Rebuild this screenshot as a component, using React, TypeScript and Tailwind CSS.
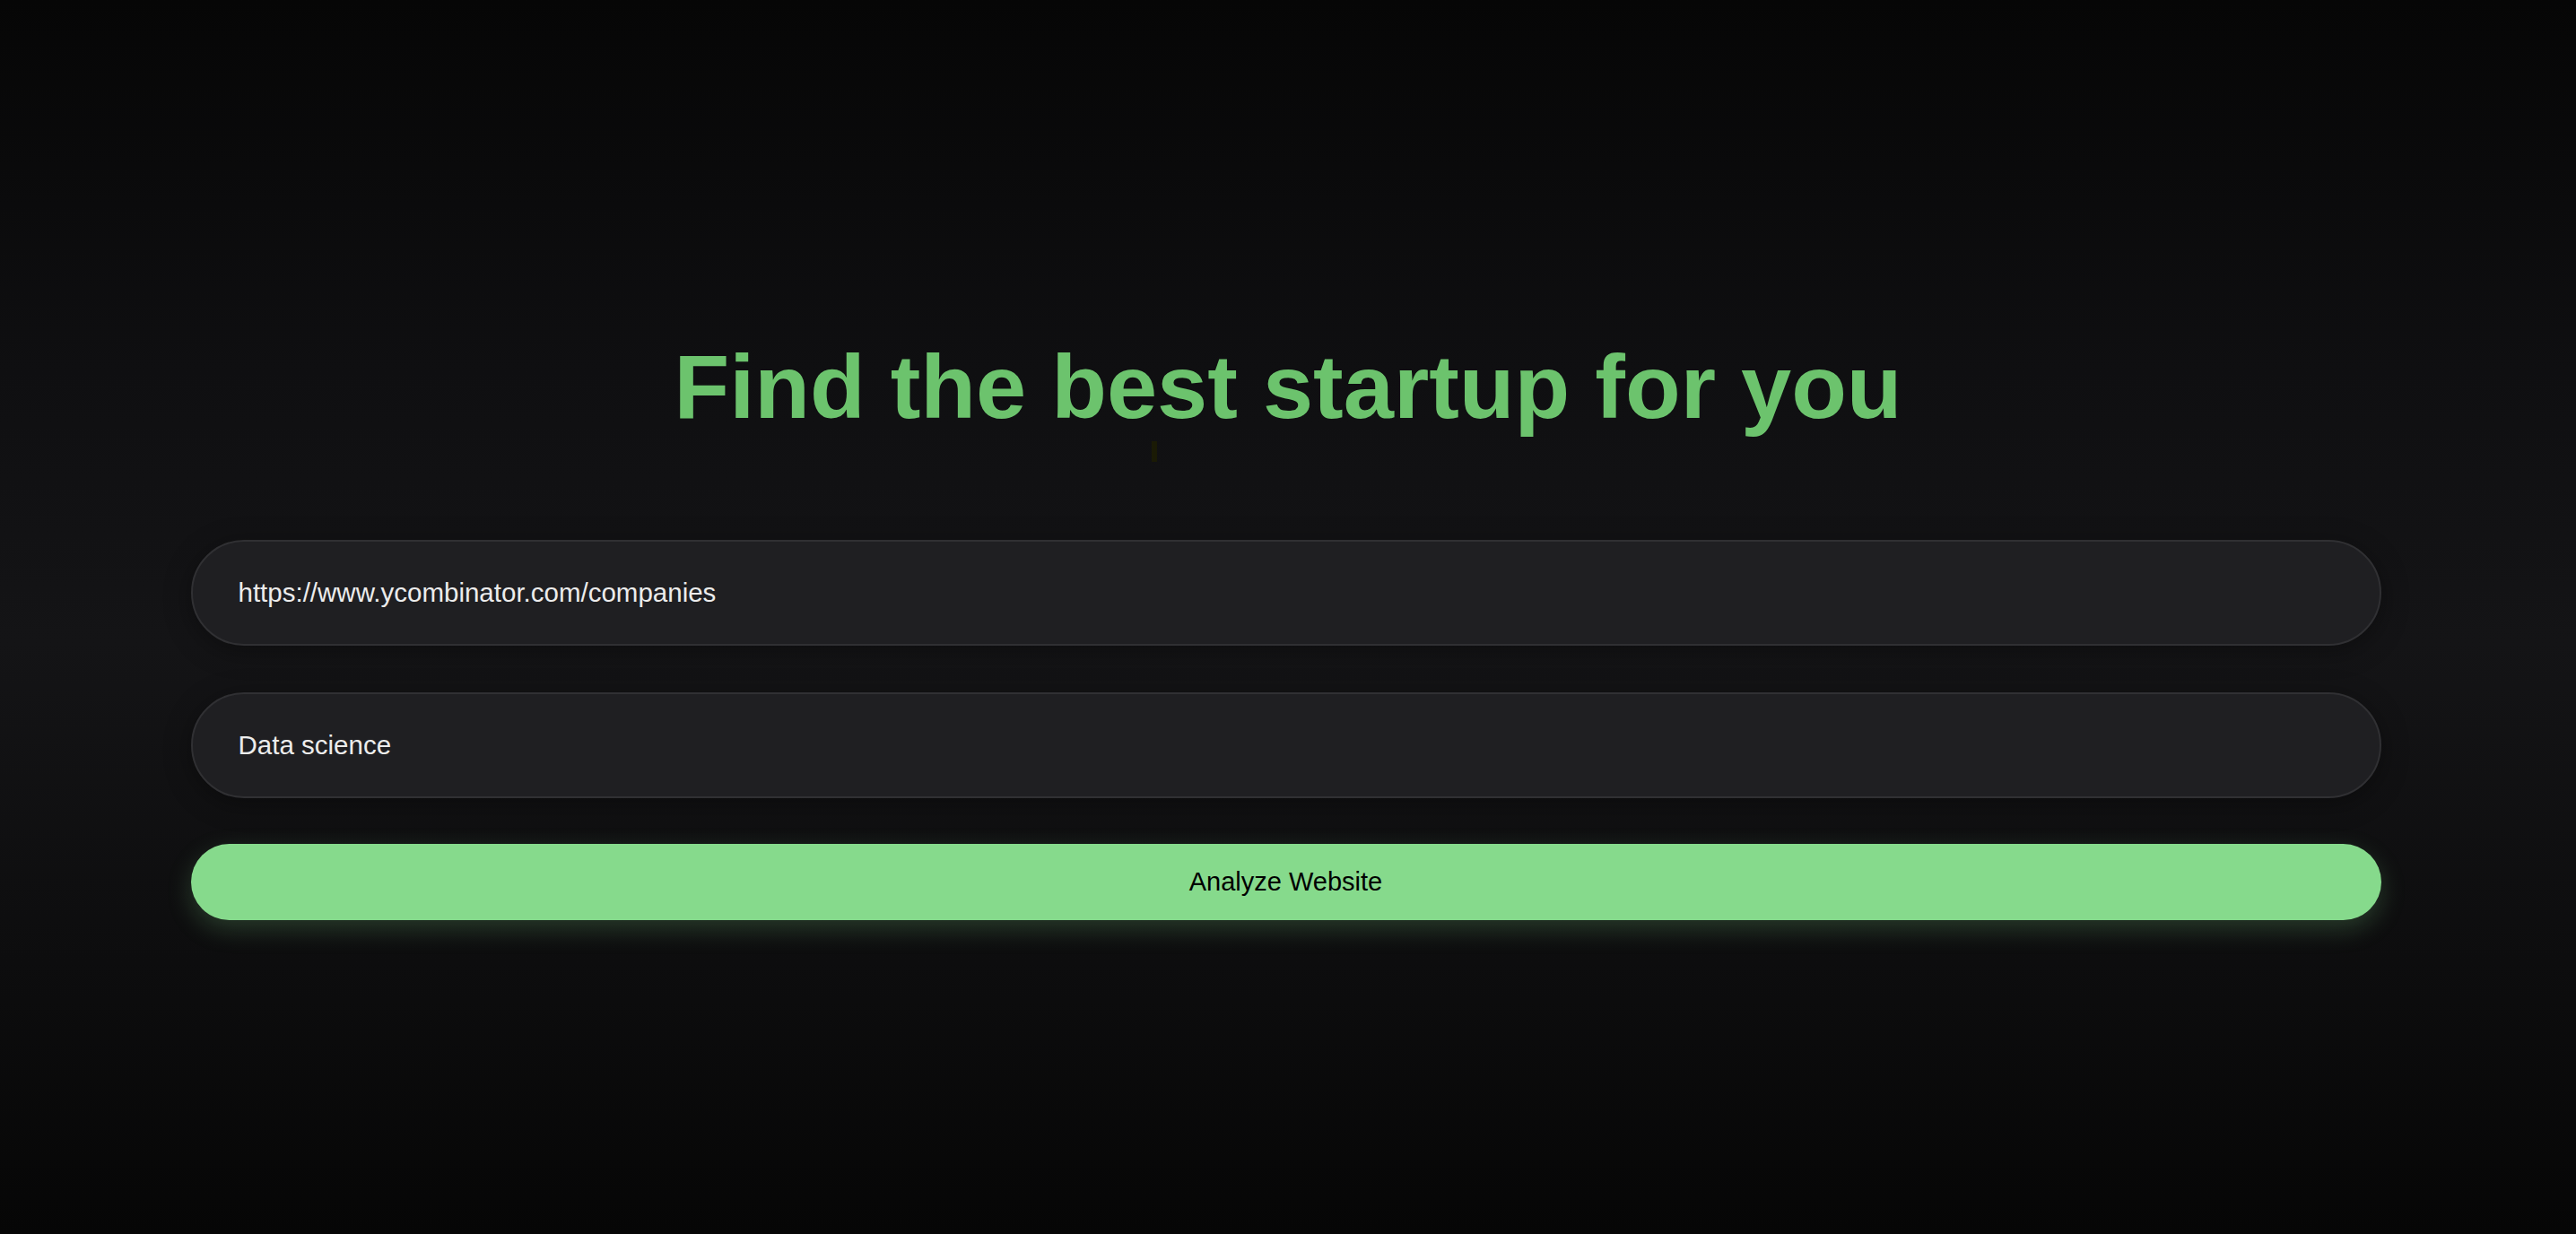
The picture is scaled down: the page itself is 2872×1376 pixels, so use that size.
import React from "react"

export default function App() {
  return (
    <main
      className="relative flex h-[1376px] w-full flex-col items-center overflow-hidden bg-[linear-gradient(to_bottom,#060606_0%,#0f0f11_30%,#141416_52%,#0d0d0e_78%,#060606_100%)] pt-[372px]"
      style={{ fontFamily: '"Liberation Sans", Arial, sans-serif' }}
    >
      <h1 className="relative text-center text-[101px] font-bold leading-[118px] text-[#6cc36d]">
        Find the best startup for you
        <span className="absolute left-[533px] top-[120px] h-[23px] w-[6px] bg-[#1a1a05]" />
      </h1>

      <div className="mt-[112px] mr-[5px] flex w-[2442px] flex-col">
        <input
          readOnly
          value="https://www.ycombinator.com/companies"
          className="h-[118px] w-full rounded-full border-2 border-[#303033] bg-[#1f1f22] px-[51px] text-[29.5px] text-[#ececec] shadow-[0_6px_30px_rgba(0,0,0,0.35)] outline-none"
        />
        <input
          readOnly
          value="Data science"
          className="mt-[52px] h-[118px] w-full rounded-full border-2 border-[#303033] bg-[#1f1f22] px-[51px] text-[29.5px] text-[#ececec] shadow-[0_6px_30px_rgba(0,0,0,0.35)] outline-none"
        />
        <button className="mt-[51px] h-[85px] w-full rounded-full bg-[#86da8c] text-[29px] text-black shadow-[0_10px_28px_rgba(134,218,140,0.22)]">
          Analyze Website
        </button>
      </div>
    </main>
  )
}
